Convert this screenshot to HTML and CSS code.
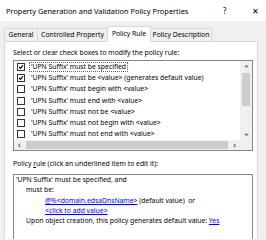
FILE: index.html
```html
<!DOCTYPE html>
<html lang="en">
<head>
    <meta charset="UTF-8">
    <title>Property Generation and Validation Policy Properties</title>
    <link rel="stylesheet" href="styles.css">
</head>
<body>
    <div class="titlebar">
        <span class="title">Property Generation and Validation Policy Properties</span>
        <span class="help">?</span>
        <span class="close">&#x2715;</span>
    </div>
    <div class="dialog">
        <div class="tabs">
            <div class="tab tab-general">General</div>
            <div class="tab tab-controlled">Controlled Property</div>
            <div class="tab tab-rule active">Policy Rule</div>
            <div class="tab tab-desc">Policy Description</div>
        </div>
        <div class="panel">
            <div class="label">Select or clear check boxes to modify the policy rule:</div>
            <div class="listbox">
                <div class="rows">
                    <div class="row"><span class="check on"><svg viewBox="0 0 8 8"><path d="M1.5 4 L3.3 5.8 L6.6 1.8" /></svg></span><span class="text focus">'UPN Suffix' must be specified</span></div>
                    <div class="row"><span class="check on"><svg viewBox="0 0 8 8"><path d="M1.5 4 L3.3 5.8 L6.6 1.8" /></svg></span><span class="text">'UPN Suffix' must be &lt;value&gt; (generates default value)</span></div>
                    <div class="row"><span class="check"></span><span class="text">'UPN Suffix' must begin with &lt;value&gt;</span></div>
                    <div class="row"><span class="check"></span><span class="text">'UPN Suffix' must end with &lt;value&gt;</span></div>
                    <div class="row"><span class="check"></span><span class="text">'UPN Suffix' must not be &lt;value&gt;</span></div>
                    <div class="row"><span class="check"></span><span class="text">'UPN Suffix' must not begin with &lt;value&gt;</span></div>
                    <div class="row"><span class="check"></span><span class="text">'UPN Suffix' must not end with &lt;value&gt;</span></div>
                </div>
                <div class="vscroll">
                    <span class="arrow"><svg viewBox="0 0 8 8"><path d="M2 5 L4 3 L6 5" /></svg></span>
                    <span class="vthumb"></span>
                    <span class="vtrack"></span>
                    <span class="arrow"><svg viewBox="0 0 8 8"><path d="M2 3 L4 5 L6 3" /></svg></span>
                </div>
                <div class="hscroll">
                    <span class="harrow"><svg viewBox="0 0 8 8"><path d="M5 2 L3 4 L5 6" /></svg></span>
                    <span class="hthumb"></span>
                    <span class="harrow"><svg viewBox="0 0 8 8"><path d="M3 2 L5 4 L3 6" /></svg></span>
                </div>
                <div class="corner"></div>
            </div>
            <div class="label rule-label">Policy <u>r</u>ule (click an underlined item to edit it):</div>
            <div class="rulebox">
                <div>'UPN Suffix' must be specified, and</div>
                <div class="indent1">must be:</div>
                <div class="indent2"><a href="#">@%&lt;domain.edsaDnsName&gt;</a> (default value)&nbsp; or</div>
                <div class="indent2"><a href="#">&lt;click to add value&gt;</a></div>
                <div class="indent1">Upon object creation, this policy generates default value: <a href="#">Yes</a></div>
            </div>
        </div>
    </div>
</body>
</html>
```

FILE: styles.css
```css
body {
    margin: 0;
    padding: 0;
    width: 266px;
    height: 240px;
    overflow: hidden;
    background-color: #f0f0f0;
    font-family: 'Noto Sans', sans-serif;
    font-size: 6.8px;
    color: #000;
}
.titlebar {
    height: 21px;
    background: white;
    display: flex;
    align-items: center;
    padding-left: 6px;
    font-size: 7.4px;
}
.title {
    flex: 1;
}
.help {
    width: 10px;
    margin-right: 19px;
    font-size: 8px;
}
.close {
    width: 14px;
    font-size: 8px;
}
.dialog {
    padding: 6px 8px 0 4px;
}
.tabs {
    display: flex;
    height: 14px;
    align-items: flex-end;
}
.tab {
    height: 13px;
    line-height: 12px;
    border: 1px solid #d9d9d9;
    border-bottom: none;
    border-right: none;
    text-align: center;
    box-sizing: border-box;
    background: #f0f0f0;
}
.tab-general { width: 33px; }
.tab-controlled { width: 70px; }
.tab-rule { width: 44px; }
.tab-desc { width: 61px; border-right: 1px solid #d9d9d9; }
.tab.active {
    background: white;
    height: 16px;
    line-height: 13px;
    margin-bottom: -1px;
    border-right: 1px solid #d9d9d9;
    position: relative;
}
.tab.active + .tab {
    border-left: none;
}
.panel {
    background: white;
    border: 1px solid #d9d9d9;
    border-bottom: none;
    height: 198px;
    box-sizing: border-box;
    padding: 4px 4px 0 8px;
    overflow: hidden;
}
.label {
    height: 14px;
    line-height: 14px;
}
.listbox {
    width: 240px;
    box-sizing: border-box;
    border: 1px solid #828790;
    display: grid;
    grid-template-columns: 1fr 12px;
    grid-template-rows: 79px 10px;
}
.rows {
    overflow: hidden;
    white-space: nowrap;
}
.row {
    height: 11.3px;
    display: flex;
    align-items: center;
    padding-left: 3px;
}
.check {
    width: 8px;
    height: 8px;
    box-sizing: border-box;
    border: 1px solid #333;
    margin-right: 4px;
    display: flex;
}
.check svg {
    width: 6px;
    height: 6px;
    fill: none;
    stroke: #000;
    stroke-width: 1.6;
}
.text {
    padding: 0 2px;
    line-height: 10px;
}
.text.focus {
    outline: 1px dotted #666;
    outline-offset: -1px;
}
.vscroll {
    background: #f0f0f0;
    display: flex;
    flex-direction: column;
}
.arrow {
    height: 11px;
    display: flex;
    justify-content: center;
    align-items: center;
}
.arrow svg, .harrow svg {
    width: 7px;
    height: 7px;
    fill: none;
    stroke: #606060;
    stroke-width: 1.2;
}
.vthumb {
    height: 33px;
    margin: 1px 2px;
    background: #cdcdcd;
}
.vtrack {
    flex: 1;
}
.hscroll {
    background: #f0f0f0;
    display: flex;
}
.harrow {
    width: 11px;
    display: flex;
    justify-content: center;
    align-items: center;
}
.hthumb {
    flex: 1;
    margin: 1px;
    background: #cdcdcd;
}
.corner {
    background: #f0f0f0;
}
.rule-label {
    margin-top: 6px;
    height: 17px;
    line-height: 13px;
}
.rulebox {
    width: 240px;
    height: 70px;
    box-sizing: border-box;
    border: 1px solid #828790;
    border-bottom: none;
    padding: 0 2px;
    line-height: 10.3px;
    white-space: nowrap;
}
.indent1 {
    padding-left: 10px;
}
.indent2 {
    padding-left: 29px;
}
.rulebox a {
    color: #0000ee;
}
```
